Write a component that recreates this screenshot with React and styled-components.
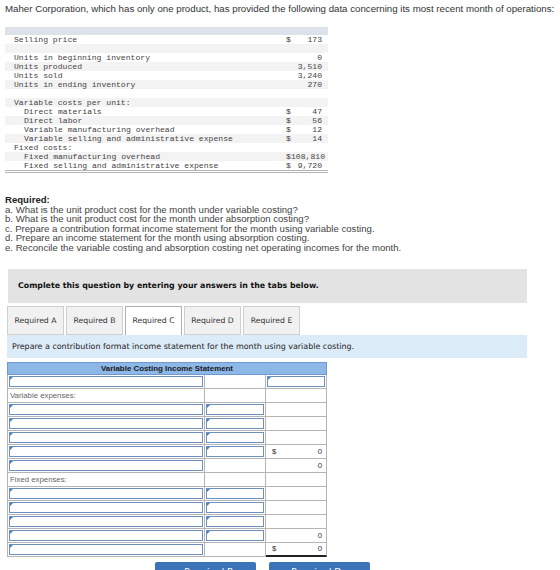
import React from 'react';
import styled, { createGlobalStyle, css } from 'styled-components';

const Global = createGlobalStyle`
  html, body { margin: 0; padding: 0; background: #fff; }
  body { font-family: "Liberation Sans", Arial, sans-serif; color: #333; }
  * { box-sizing: border-box; }
`;

const Page = styled.div`
  width: 560px;
  height: 570px;
  overflow: hidden;
  padding: 3px 5px 0 5px;
`;

const Intro = styled.p`
  margin: 0;
  font-size: 9.7px;
  line-height: 12px;
  color: #333;
  white-space: nowrap;
`;

/* ---- given data block ---- */
const DataTable = styled.div`
  margin-top: 12px;
  width: 323px;
  border-bottom: 3px double #b4b4b4;
`;

const DataHead = styled.div`
  height: 8px;
  background: #dde1e9;
`;

const DataRow = styled.div`
  display: grid;
  grid-template-columns: 1fr 5px 31px;
  height: 9px;
  padding: 0 6px 0 9px;
  font-family: "Liberation Mono", "DejaVu Sans Mono", monospace;
  font-size: 8.1px;
  line-height: 9px;
  color: #444;
  background: ${p => (p.$shade ? '#f3f3f3' : '#fff')};
  white-space: pre;
`;

const DataLabel = styled.span`
  padding-left: ${p => p.$level * 10}px;
`;

const DataNum = styled.span`
  text-align: right;
`;

/* ---- required list ---- */
const Required = styled.div`
  margin-top: 22px;
  font-size: 9.6px;
  line-height: 9.6px;
  color: #444;
`;

const RequiredTitle = styled.div`
  font-weight: bold;
  color: #222;
`;

const Verdana = css`
  font-family: Verdana, "DejaVu Sans", sans-serif;
`;

const Notice = styled.div`
  ${Verdana};
  margin: 16px 0 0 3px;
  width: 519px;
  height: 34px;
  padding-left: 10px;
  display: flex;
  align-items: center;
  background: #e3e3e3;
  font-size: 7.85px;
  font-weight: bold;
  color: #111;
`;

const Tabs = styled.div`
  display: flex;
  gap: 2px;
  margin: 3px 0 0 2px;
`;

const Tab = styled.div`
  ${Verdana};
  width: 57px;
  height: 29px;
  display: flex;
  align-items: center;
  justify-content: center;
  font-size: 7.7px;
  color: #333;
  background: ${p => (p.$active ? '#fff' : '#f1f1f1')};
  border: 1px solid ${p => (p.$active ? '#b0b0b0' : '#cfcfcf')};
  border-bottom: ${p => (p.$active ? 'none' : '1px solid #cfcfcf')};
`;

const Prompt = styled.div`
  ${Verdana};
  margin-left: 2px;
  width: 520px;
  height: 23px;
  padding-left: 5px;
  display: flex;
  align-items: center;
  background: #dcebf8;
  font-size: 7.95px;
  color: #222;
`;

/* ---- answer table ---- */
const Statement = styled.div`
  margin: 4px 0 0 2px;
  width: 319px;
  display: grid;
  grid-template-columns: 197px 61px 61px;
  border-left: 1px solid #b5b5b5;
`;

const StatementHead = styled.div`
  grid-column: 1 / -1;
  height: 13px;
  background: #8db7e6;
  border: 1px solid #6d9bd1;
  margin-left: -1px;
  display: flex;
  align-items: center;
  justify-content: center;
  font-size: 7.9px;
  font-weight: bold;
  color: #1a1a1a;
`;

const Cell = styled.div`
  position: relative;
  height: 14px;
  border-right: 1px solid #b5b5b5;
  border-bottom: ${p => (p.$total ? '2px solid #222' : '1px solid #b5b5b5')};
  display: flex;
  align-items: center;
  justify-content: space-between;
  padding: 0 4px 0 6px;
  font-size: 7.8px;
  color: #333;
`;

const Caption = styled.span`
  color: #666;
  margin-left: -4px;
`;

const InputCell = styled.div`
  position: relative;
  height: 14px;
  border-right: 1px solid #b5b5b5;
  border-bottom: 1px solid #b5b5b5;
  padding: 1px;

  &::after {
    content: '';
    position: absolute;
    left: 2px;
    top: 2px;
    border-top: 3px solid #3f7fd0;
    border-right: 3px solid transparent;
  }
`;

const Field = styled.input`
  display: block;
  width: 100%;
  height: 100%;
  margin: 0;
  padding: 0 3px;
  border: 1.5px solid #6f8fbd;
  background: #fff;
  font-size: 7px;
  outline: none;
`;

const Buttons = styled.div`
  display: flex;
  gap: 13px;
  margin: 5px 0 0 150px;
`;

const NavButton = styled.button`
  ${Verdana};
  width: 101px;
  height: 26px;
  border: none;
  border-radius: 2px;
  background: #3b74bb;
  color: #fff;
  font-size: 9px;
  display: flex;
  align-items: flex-start;
  justify-content: center;
  gap: 4px;
  padding: 5px 0 0;
`;

const dataRows = [
  { label: 'Selling price', sign: '$', value: '173' },
  { label: '' },
  { label: 'Units in beginning inventory', value: '0' },
  { label: 'Units produced', value: '3,510' },
  { label: 'Units sold', value: '3,240' },
  { label: 'Units in ending inventory', value: '270' },
  { label: '' },
  { label: 'Variable costs per unit:' },
  { label: 'Direct materials', level: 1, sign: '$', value: '47' },
  { label: 'Direct labor', level: 1, sign: '$', value: '56' },
  { label: 'Variable manufacturing overhead', level: 1, sign: '$', value: '12' },
  { label: 'Variable selling and administrative expense', level: 1, sign: '$', value: '14' },
  { label: 'Fixed costs:' },
  { label: 'Fixed manufacturing overhead', level: 1, sign: '$', value: '108,810' },
  { label: 'Fixed selling and administrative expense', level: 1, sign: '$', value: '9,720' },
];

const questions = [
  'a. What is the unit product cost for the month under variable costing?',
  'b. What is the unit product cost for the month under absorption costing?',
  'c. Prepare a contribution format income statement for the month using variable costing.',
  'd. Prepare an income statement for the month using absorption costing.',
  'e. Reconcile the variable costing and absorption costing net operating incomes for the month.',
];

// each row: [first column, second column, third column]
// 'in' = entry field, '' = blank, text = caption, {sign, value, total} = computed figure
const statementRows = [
  ['in', '', 'in'],
  ['Variable expenses:', '', ''],
  ['in', 'in', ''],
  ['in', 'in', ''],
  ['in', 'in', ''],
  ['in', 'in', { sign: '$', value: '0' }],
  ['in', '', { value: '0' }],
  ['Fixed expenses:', '', ''],
  ['in', 'in', ''],
  ['in', 'in', ''],
  ['in', 'in', ''],
  ['in', 'in', { value: '0' }],
  ['in', '', { sign: '$', value: '0', total: true }],
];

function StatementCell({ spec }) {
  if (spec === 'in') {
    return (
      <InputCell>
        <Field type="text" readOnly />
      </InputCell>
    );
  }
  if (typeof spec === 'object') {
    return (
      <Cell $total={spec.total}>
        <span>{spec.sign || ''}</span>
        <span>{spec.value}</span>
      </Cell>
    );
  }
  return (
    <Cell>
      <Caption>{spec}</Caption>
    </Cell>
  );
}

export default function App() {
  const tabs = ['Required A', 'Required B', 'Required C', 'Required D', 'Required E'];
  return (
    <>
      <Global />
      <Page>
        <Intro>
          Maher Corporation, which has only one product, has provided the following data concerning its most recent month of operations:
        </Intro>

        <DataTable>
          <DataHead />
          {dataRows.map((r, i) => (
            <DataRow key={i} $shade={i % 2 === 1}>
              <DataLabel $level={r.level || 0}>{r.label}</DataLabel>
              <span>{r.sign || ''}</span>
              <DataNum>{r.value || ''}</DataNum>
            </DataRow>
          ))}
        </DataTable>

        <Required>
          <RequiredTitle>Required:</RequiredTitle>
          {questions.map(q => (
            <div key={q}>{q}</div>
          ))}
        </Required>

        <Notice>Complete this question by entering your answers in the tabs below.</Notice>

        <Tabs>
          {tabs.map(t => (
            <Tab key={t} $active={t === 'Required C'}>
              {t}
            </Tab>
          ))}
        </Tabs>

        <Prompt>Prepare a contribution format income statement for the month using variable costing.</Prompt>

        <Statement>
          <StatementHead>Variable Costing Income Statement</StatementHead>
          {statementRows.map((row, i) =>
            row.map((spec, j) => <StatementCell key={`${i}-${j}`} spec={spec} />)
          )}
        </Statement>

        <Buttons>
          <NavButton>‹ Required B</NavButton>
          <NavButton>Required D ›</NavButton>
        </Buttons>
      </Page>
    </>
  );
}
